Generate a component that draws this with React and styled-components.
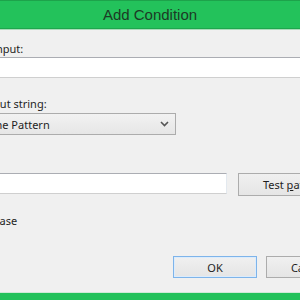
import styled, { createGlobalStyle } from 'styled-components'

const GlobalStyle = createGlobalStyle`
  html, body {
    margin: 0;
    padding: 0;
    background: #f0f0f0;
    overflow: hidden;
  }
  body {
    width: 300px;
    height: 300px;
    font-family: "Noto Sans", "Open Sans", sans-serif;
  }
`

const DialogWindow = styled.div`
  width: 444px;
  height: 300px;
  margin-left: -72px;
  display: flex;
  flex-direction: column;
  background: #f0f0f0;
  box-sizing: border-box;
  border-bottom: 7px solid #22c15a;
`

const TitleBar = styled.div`
  height: 27px;
  flex: none;
  background: #23c25b;
  border-top: 1px solid #1da34b;
  border-bottom: 1px solid #1ea64d;
  box-shadow: 0 1px 0 #a9dcb9;
  display: flex;
  align-items: center;
  justify-content: center;
  font-family: "Liberation Sans", Arial, sans-serif;
  font-size: 15px;
  color: #1c3a25;
`

const Body = styled.div`
  flex: 1;
  display: flex;
  flex-direction: column;
  padding: 12px 22px 0 12px;
  font-size: 11px;
  line-height: 15px;
  color: #1e1e1e;
  border-bottom: 1px solid #cfe9d7;
`

const Label = styled.div`
  margin-top: ${p => p.$top || 0}px;
  margin-bottom: ${p => p.$bottom || 0}px;
  white-space: nowrap;
`

const TextBox = styled.div`
  height: 19px;
  box-sizing: content-box;
  background: #fff;
  border: 1px solid #e3e9ef;
  border-top-color: #abadb3;
  border-bottom: 1px solid #cfcfcf;
  margin-top: ${p => p.$top || 0}px;
  flex: ${p => (p.$grow ? 1 : 'none')};
`

const ComboBox = styled.div`
  width: 224px;
  height: 20px;
  margin-top: 2px;
  display: flex;
  align-items: center;
  justify-content: space-between;
  padding: 0 6px 0 4px;
  box-sizing: content-box;
  border: 1px solid #acacac;
  background: linear-gradient(#f2f2f2, #e6e6e6);
  white-space: nowrap;
`

const PatternRow = styled.div`
  display: flex;
  gap: 11px;
  height: 23px;
`

const PushButton = styled.div`
  width: ${p => p.$width || 84}px;
  height: ${p => p.$height || 22}px;
  box-sizing: border-box;
  display: flex;
  align-items: center;
  justify-content: center;
  border: 1px solid ${p => (p.$default ? '#7eb4ea' : '#acacac')};
  background: linear-gradient(#f0f0f0, #e5e5e5);
  box-shadow: ${p => (p.$default ? 'inset 0 0 0 1px #dcecfc' : 'none')};
  white-space: nowrap;
  u { text-decoration: underline; }
`

const CheckRow = styled.label`
  display: flex;
  align-items: center;
  gap: 4px;
  margin-top: 17px;
  height: 15px;
  white-space: nowrap;
`

const CheckBox = styled.span`
  width: 11px;
  height: 11px;
  border: 1px solid #707070;
  background: #fff;
`

const ButtonBar = styled.div`
  margin-top: 28px;
  display: flex;
  justify-content: flex-end;
  gap: 9px;
`

function Chevron() {
  return (
    <svg width="9" height="6" viewBox="0 0 9 6">
      <path d="M1 1 L4.5 4.5 L8 1" fill="none" stroke="#555" strokeWidth="1.6" />
    </svg>
  )
}

export default function App() {
  return (
    <>
      <GlobalStyle />
      <DialogWindow>
        <TitleBar>Add Condition</TitleBar>
        <Body>
          <Label>Condition input:</Label>
          <TextBox $top={1} />
          <Label $top={18}>Check if input string:</Label>
          <ComboBox>
            <span>Matches the Pattern</span>
            <Chevron />
          </ComboBox>
          <Label $top={17} $bottom={6}>Pattern:</Label>
          <PatternRow>
            <TextBox $grow />
            <PushButton $width={112} $height={23}>
              <span>Test <u>p</u>attern</span>
            </PushButton>
          </PatternRow>
          <CheckRow>
            <CheckBox />
            Ignore case
          </CheckRow>
          <ButtonBar>
            <PushButton $default>OK</PushButton>
            <PushButton>Cancel</PushButton>
          </ButtonBar>
        </Body>
      </DialogWindow>
    </>
  )
}
